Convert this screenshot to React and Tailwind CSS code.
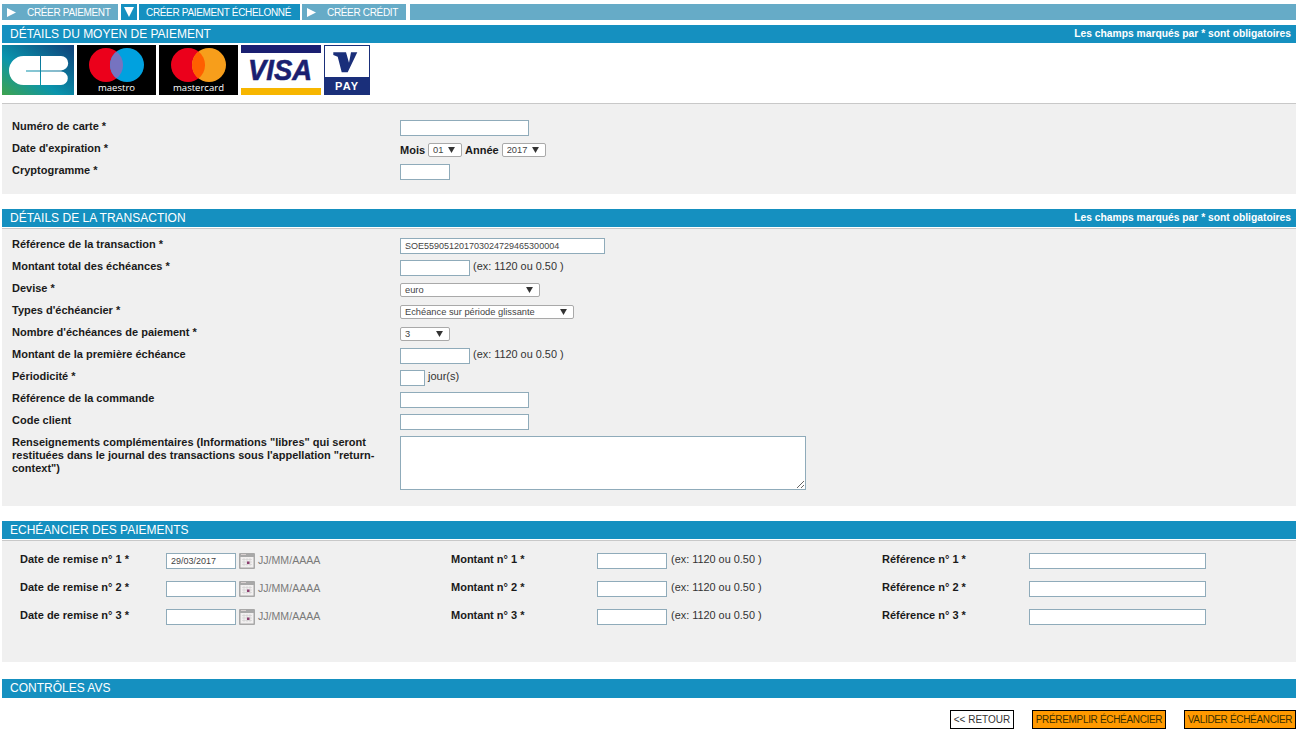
import React from "react";

const Tri = ({ down, cls }) => (
  <svg viewBox="0 0 12 12" className={cls} fill="#fff">
    {down ? <path d="M0 0h12L6 12z" /> : <path d="M0 0l12 6-12 6z" />}
  </svg>
);

const Header = ({ title, note, cls = "" }) => (
  <div className={`h-[18px] bg-[#1590c0] flex items-start justify-between pl-2 pr-[5px] text-white ${cls}`}>
    <span className="text-[12px] leading-[18px]">{title}</span>
    {note && <span className="text-[10.3px] font-bold leading-[18px]">Les champs marqués par * sont obligatoires</span>}
  </div>
);

const Input = ({ w, value }) => (
  <input
    readOnly
    defaultValue={value}
    className={`${w} h-4 bg-white border border-[#8fabba] px-1 text-[9px] text-[#444] outline-none shrink-0`}
  />
);

const Select = ({ w, value }) => (
  <span className={`relative flex ${w} h-[14px] shrink-0`}>
    <select
      defaultValue={value}
      className="appearance-none w-full h-full bg-white border border-[#a9a9a9] rounded-[2px] pl-1 text-[9.3px] font-normal leading-[12px] text-[#444] outline-none"
    >
      <option>{value}</option>
    </select>
    <svg viewBox="0 0 8 7" className="absolute right-[7px] top-[4px] w-[7px] h-[6px]" fill="#333">
      <path d="M0 0h8L4 7z" />
    </svg>
  </span>
);

const Row = ({ label, children, h = "h-[22px]" }) => (
  <div className={`flex ${h}`}>
    <div className="w-[398px] pl-[10px] pr-[12px] text-[11px] font-bold leading-[13px] text-[#1a1a1a] shrink-0">{label}</div>
    <div className="flex items-start gap-[3px] text-[11px] text-[#333] leading-4">{children}</div>
  </div>
);

const Hint = ({ cls = "" }) => <span className={`text-[10.9px] leading-[13px] text-[#333] ${cls}`}>(ex: 1120 ou 0.50 )</span>;

const Calendar = () => (
  <svg viewBox="0 0 16 16" className="w-4 h-4 shrink-0 ml-[3px]">
    <rect x="0" y="0" width="16" height="16" rx="1" fill="#a8a8a8" />
    <rect x="1.5" y="4" width="13" height="10.5" fill="#f2f0f0" />
    <path d="M2 1.5h5" stroke="#d8d0d0" />
    <path d="M3 6.5h10M3 9h10M3 11.5h10M5 5v8M8 5v8M11 5v8" stroke="#cfcfcf" strokeWidth=".6" />
    <rect x="8" y="8.5" width="2.5" height="2.5" fill="#8c3d6e" />
  </svg>
);

const Sched = ({ n, value }) => (
  <div className="grid grid-cols-[431px_431px_1fr] h-[28px] pl-[18px]">
    <div className="flex items-start">
      <span className="w-[146px] text-[11px] font-bold leading-[13px] text-[#1a1a1a]">Date de remise n° {n} *</span>
      <Input w="w-[70px]" value={value} />
      <Calendar />
      <span className="ml-[3px] text-[10.6px] leading-[15px] text-[#7a7a7a]">JJ/MM/AAAA</span>
    </div>
    <div className="flex items-start">
      <span className="w-[146px] text-[11px] font-bold leading-[13px] text-[#1a1a1a]">Montant n° {n} *</span>
      <Input w="w-[70px]" />
      <Hint cls="ml-[4px]" />
    </div>
    <div className="flex items-start">
      <span className="w-[147px] text-[11px] font-bold leading-[13px] text-[#1a1a1a]">Référence n° {n} *</span>
      <Input w="w-[177px]" />
    </div>
  </div>
);

const CB = () => (
  <svg viewBox="0 0 72 50" className="w-[72px] h-[50px]">
    <defs>
      <linearGradient id="cbg" x1="0" y1="1" x2="1" y2="0">
        <stop offset="0" stopColor="#3fa34d" />
        <stop offset="0.4" stopColor="#0a94ac" />
        <stop offset="1" stopColor="#0f3f78" />
      </linearGradient>
    </defs>
    <rect width="72" height="50" fill="url(#cbg)" />
    <path d="M38 11H21.5a14.5 14.5 0 0 0 0 29H38V26.4H24v-1h14z" fill="#fff" />
    <path d="M39 11h20a7 7 0 0 1 0 14.4H39zM39 26.4h20a6.8 6.8 0 0 1 0 13.6H39z" fill="#fff" />
  </svg>
);

const Maestro = () => (
  <svg viewBox="0 0 79 50" className="w-[79px] h-[50px]">
    <rect width="79" height="50" fill="#000" />
    <circle cx="29" cy="20" r="17" fill="#eb001b" />
    <circle cx="50" cy="20" r="17" fill="#00a1df" />
    <path d="M39.5 6.6A17 17 0 0 1 39.5 33.4 17 17 0 0 1 39.5 6.6z" fill="#7673c0" />
    <text x="39.5" y="45.5" textAnchor="middle" fill="#fff" fontSize="9" textLength="37" lengthAdjust="spacingAndGlyphs" fontFamily="'Open Sans', sans-serif">maestro</text>
  </svg>
);

const Master = () => (
  <svg viewBox="0 0 79 50" className="w-[79px] h-[50px]">
    <rect width="79" height="50" fill="#000" />
    <circle cx="29" cy="20" r="17" fill="#eb001b" />
    <circle cx="50" cy="20" r="17" fill="#f79e1b" />
    <path d="M39.5 6.6A17 17 0 0 1 39.5 33.4 17 17 0 0 1 39.5 6.6z" fill="#ff5f00" />
    <text x="39.5" y="45.5" textAnchor="middle" fill="#fff" fontSize="9" textLength="51" lengthAdjust="spacingAndGlyphs" fontFamily="'Open Sans', sans-serif">mastercard</text>
  </svg>
);

const Visa = () => (
  <svg viewBox="0 0 80 50" className="w-20 h-[50px]">
    <rect width="80" height="50" fill="#fff" />
    <rect width="80" height="8" fill="#1a1f71" />
    <rect y="43" width="80" height="7" fill="#f7b600" />
    <text x="39" y="35" textAnchor="middle" fill="#1a1f71" stroke="#1a1f71" strokeWidth=".6" fontSize="29" fontWeight="bold" fontStyle="italic" textLength="64" lengthAdjust="spacingAndGlyphs" fontFamily="'Liberation Sans', sans-serif">VISA</text>
  </svg>
);

const VPay = () => (
  <svg viewBox="0 0 46 50" className="w-[46px] h-[50px]">
    <rect x=".5" y=".5" width="45" height="49" fill="#fff" stroke="#1a2f7a" />
    <rect x="1" y="32" width="44" height="17" fill="#1a2f7a" />
    <path d="M9.3 7.3H22l3 10.5 2-10.5h6.3L23.7 27.3h-6L13.7 11.7 9.3 10z" fill="#1a2f7a" />
    <text x="22.5" y="45" textAnchor="middle" fill="#fff" fontSize="11" fontWeight="bold" textLength="23" fontFamily="'Liberation Sans', sans-serif">PAY</text>
  </svg>
);

const Tab = ({ children, w, dark }) => (
  <div className={`${w} h-4 flex items-center text-white text-[10px] tracking-[-0.33px] ${dark ? "bg-[#1590c0]" : "bg-[#66abc7]"}`}>{children}</div>
);

export default function App() {
  return (
    <div className="w-[1300px] h-[731px] bg-white pl-[2px] pr-1 pt-1 overflow-hidden font-['Liberation_Sans',Arial,sans-serif]">
      <div className="flex h-4 gap-[2px]">
        <Tab w="w-[116px]">
          <Tri cls="w-[9px] h-[9px] ml-[5px] mr-[11px]" />CRÉER PAIEMENT
        </Tab>
        <div className="w-[16px] h-4 ml-[1px] bg-[#1590c0] flex items-center justify-center">
          <Tri down cls="w-[10px] h-[10px]" />
        </div>
        <Tab w="w-[161px]" dark>
          <span className="pl-[7px]">CRÉER PAIEMENT ÉCHELONNÉ</span>
        </Tab>
        <Tab w="w-[104px]">
          <Tri cls="w-[9px] h-[9px] ml-[5px] mr-[11px]" />CRÉER CRÉDIT
        </Tab>
        <div className="flex-1 ml-[2px] bg-[#66abc7]" />
      </div>

      <Header title="DÉTAILS DU MOYEN DE PAIEMENT" note cls="mt-[5px]" />
      <div className="flex gap-[3px] mt-[2px] h-[50px]">
        <CB />
        <Maestro />
        <Master />
        <Visa />
        <VPay />
      </div>
      <div className="mt-2 h-[1px] bg-[#c8c8c8]" />
      <div className="bg-[#f0f0f0] pt-4 pb-2">
        <Row label="Numéro de carte *">
          <Input w="w-[129px]" />
        </Row>
        <Row label="Date d'expiration *">
          <div className="flex items-center gap-[3px] h-4 font-bold text-[#1a1a1a]">
            <span>Mois</span>
            <Select w="w-[34px]" value="01" />
            <span>Année</span>
            <Select w="w-[44px]" value="2017" />
          </div>
        </Row>
        <Row label="Cryptogramme *">
          <Input w="w-[50px]" />
        </Row>
      </div>

      <Header title="DÉTAILS DE LA TRANSACTION" note cls="mt-[15px]" />
      <div className="mt-[1px] h-[1px] bg-[#c8c8c8]" />
      <div className="bg-[#f0f0f0] pt-[9px] pb-4">
        <Row label="Référence de la transaction *">
          <Input w="w-[205px]" value="SOE559051201703024729465300004" />
        </Row>
        <Row label="Montant total des échéances *">
          <Input w="w-[70px]" />
          <Hint />
        </Row>
        <Row label="Devise *">
          <div className="pt-[1px]"><Select w="w-[140px]" value="euro" /></div>
        </Row>
        <Row label="Types d'échéancier *">
          <div className="pt-[1px]"><Select w="w-[174px]" value="Echéance sur période glissante" /></div>
        </Row>
        <Row label="Nombre d'échéances de paiement *">
          <div className="pt-[1px]"><Select w="w-[50px]" value="3" /></div>
        </Row>
        <Row label="Montant de la première échéance">
          <Input w="w-[70px]" />
          <Hint />
        </Row>
        <Row label="Périodicité *">
          <Input w="w-[25px]" />
          <span className="leading-[13px]">jour(s)</span>
        </Row>
        <Row label="Référence de la commande">
          <Input w="w-[129px]" />
        </Row>
        <Row label="Code client">
          <Input w="w-[129px]" />
        </Row>
        <Row h="h-[54px]" label={'Renseignements complémentaires (Informations "libres" qui seront restituées dans le journal des transactions sous l\'appellation "return-context")'}>
          <textarea readOnly className="w-[406px] h-[54px] bg-white border border-[#8fabba] outline-none resize-y" />
        </Row>
      </div>

      <Header title="ECHÉANCIER DES PAIEMENTS" cls="mt-[15px]" />
      <div className="mt-[1px] h-[1px] bg-[#c8c8c8]" />
      <div className="bg-[#f0f0f0] h-[121px] pt-3">
        <Sched n={1} value="29/03/2017" />
        <Sched n={2} />
        <Sched n={3} />
      </div>

      <Header title="CONTRÔLES AVS" cls="mt-[17px] h-[19px]" />
      <div className="flex justify-end mt-3 gap-[18px] h-[19px] text-[10px] whitespace-nowrap">
        <button className="w-[64px] bg-white border border-black text-[#333]">&lt;&lt; RETOUR</button>
        <button className="w-[134px] bg-[#ff9900] border border-black text-[#3a3000] tracking-[-0.33px]">PRÉREMPLIR ÉCHÉANCIER</button>
        <button className="w-[112px] bg-[#ff9900] border border-black text-[#3a3000] tracking-[-0.33px]">VALIDER ÉCHÉANCIER</button>
      </div>
    </div>
  );
}
